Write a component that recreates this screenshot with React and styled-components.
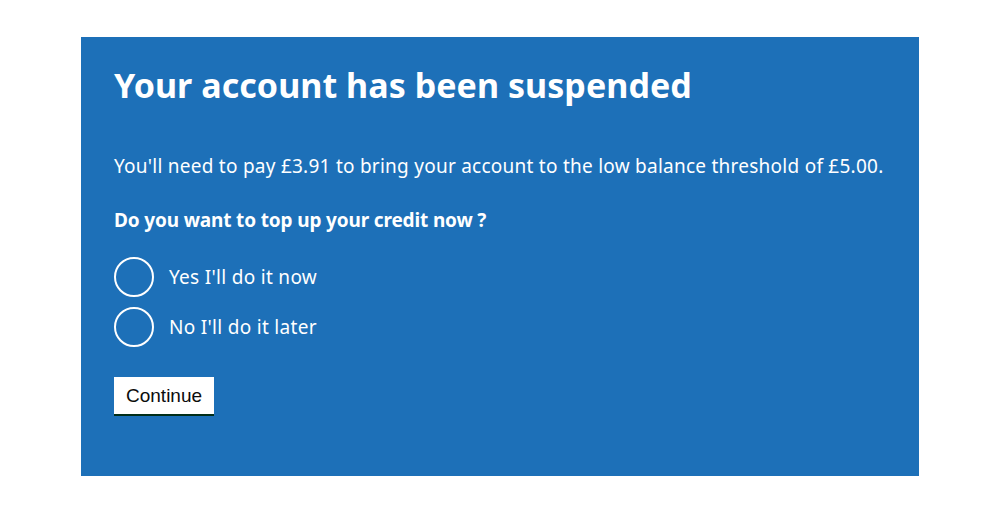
import React from 'react';
import styled, { createGlobalStyle } from 'styled-components';

const GlobalStyle = createGlobalStyle`
    body {
        margin: 0;
        background: #ffffff;
        font-family: "Noto Sans", "Liberation Sans", sans-serif;
    }
`;

const Panel = styled.main`
    width: 838px;
    height: 439px;
    box-sizing: border-box;
    margin: 37px auto 0;
    padding: 27px 33px;
    background: #1d70b8;
    color: #ffffff;
`;

const Title = styled.h1`
    margin: 0 0 47px;
    font-size: 34px;
    line-height: 42px;
    font-weight: 700;
    letter-spacing: 0.05px;
`;

const Lead = styled.p`
    margin: 0 0 28px;
    font-size: 19px;
    line-height: 26px;
    letter-spacing: 0.25px;
`;

const Fieldset = styled.fieldset`
    margin: 0 0 30px;
    padding: 0;
    border: 0;
`;

const Legend = styled.legend`
    padding: 0;
    margin-bottom: 24px;
    font-size: 19px;
    line-height: 26px;
    font-weight: 700;
    letter-spacing: -0.15px;
`;

const Options = styled.div`
    display: flex;
    flex-direction: column;
    gap: 10px;
`;

const Option = styled.label`
    display: flex;
    align-items: center;
    gap: 15px;
    font-size: 19px;
    letter-spacing: 0.3px;
    cursor: pointer;
`;

const Radio = styled.input.attrs({ type: 'radio' })`
    appearance: none;
    margin: 0;
    width: 40px;
    height: 40px;
    box-sizing: border-box;
    border: 2px solid #ffffff;
    border-radius: 50%;
    background: transparent;
`;

const Button = styled.button`
    padding: 8px 12px 7px;
    border: 0;
    border-radius: 0;
    background: #ffffff;
    color: #0b0c0c;
    font-family: "Liberation Sans", Arial, sans-serif;
    font-size: 19px;
    line-height: 22px;
    box-shadow: 0 2px 0 #002d18;
    cursor: pointer;
`;

const App = () => {
    return (
        <>
            <GlobalStyle />
            <Panel>
                <Title>Your account has been suspended</Title>
                <Lead>You'll need to pay £3.91 to bring your account to the low balance threshold of £5.00.</Lead>
                <Fieldset>
                    <Legend>Do you want to top up your credit now ?</Legend>
                    <Options>
                        <Option>
                            <Radio name="topup" value="yes" />
                            Yes I'll do it now
                        </Option>
                        <Option>
                            <Radio name="topup" value="no" />
                            No I'll do it later
                        </Option>
                    </Options>
                </Fieldset>
                <Button>Continue</Button>
            </Panel>
        </>
    );
};

export default App;
